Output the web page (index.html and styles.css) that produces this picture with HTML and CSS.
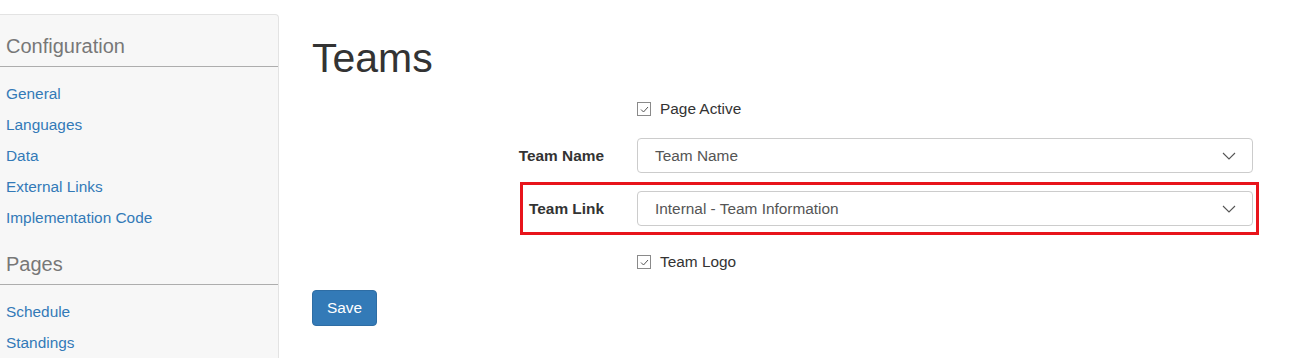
FILE: index.html
```html
<!DOCTYPE html>
<html>
<head>
<meta charset="utf-8">
<link rel="stylesheet" href="styles.css">
</head>
<body>
<div class="page">
  <aside class="sidebar">
    <h4 class="side-heading">Configuration</h4>
    <ul class="side-links">
      <li><a href="#">General</a></li>
      <li><a href="#">Languages</a></li>
      <li><a href="#">Data</a></li>
      <li><a href="#">External Links</a></li>
      <li><a href="#">Implementation Code</a></li>
    </ul>
    <h4 class="side-heading">Pages</h4>
    <ul class="side-links">
      <li><a href="#">Schedule</a></li>
      <li><a href="#">Standings</a></li>
    </ul>
  </aside>
  <main class="main">
    <h1 class="title">Teams</h1>
    <form class="form">
      <div class="row row-check">
        <div class="label"></div>
        <label class="check"><span class="box"><svg width="11" height="11" viewBox="0 0 11 11"><path d="M2 5.5 L4.5 8 L9 3" fill="none" stroke="#555" stroke-width="1"/></svg></span>Page Active</label>
      </div>
      <div class="row row-select">
        <div class="label">Team Name</div>
        <div class="select"><span>Team Name</span><svg class="chev" width="14" height="8" viewBox="0 0 14 8"><path d="M1 1 L7 7 L13 1" fill="none" stroke="#555" stroke-width="1.1"/></svg></div>
      </div>
      <div class="row row-select highlight">
        <div class="label">Team Link</div>
        <div class="select"><span>Internal - Team Information</span><svg class="chev" width="14" height="8" viewBox="0 0 14 8"><path d="M1 1 L7 7 L13 1" fill="none" stroke="#555" stroke-width="1.1"/></svg></div>
      </div>
      <div class="row row-check row-check2">
        <div class="label"></div>
        <label class="check"><span class="box"><svg width="11" height="11" viewBox="0 0 11 11"><path d="M2 5.5 L4.5 8 L9 3" fill="none" stroke="#555" stroke-width="1"/></svg></span>Team Logo</label>
      </div>
      <button type="button" class="btn">Save</button>
    </form>
  </main>
</div>
</body>
</html>
```
FILE: styles.css
```css
html, body {
  margin: 0;
  padding: 0;
  background: #fff;
}
body {
  font-family: "Liberation Sans", Arial, sans-serif;
  color: #333;
  font-size: 15.4px;
}
.page {
  display: flex;
  align-items: flex-start;
}
.sidebar {
  width: 279px;
  margin-top: 14px;
  height: 344px;
  background: #f7f7f7;
  border: 1px solid #e3e3e3;
  border-left: none;
  border-bottom: none;
  border-radius: 0 4px 0 0;
  box-sizing: border-box;
  overflow: hidden;
}
.side-heading {
  margin: 0;
  padding: 19px 0 8px 6px;
  font-size: 20px;
  line-height: 24px;
  font-weight: normal;
  color: #777;
  border-bottom: 1px solid #adadad;
}
.side-links {
  list-style: none;
  margin: 11px 0 0 0;
  padding: 0 0 0 6px;
}
.side-links li {
  line-height: 31px;
  height: 31px;
}
.side-links a {
  color: #337ab7;
  text-decoration: none;
  font-size: 15.4px;
}
.main {
  margin-left: 33px;
  flex: 1;
}
.title {
  margin: 36px 0 0 0;
  font-size: 41px;
  line-height: 44px;
  font-weight: normal;
  color: #333;
}
.form {
  display: flex;
  flex-direction: column;
  align-items: flex-start;
}
.row {
  display: flex;
  align-items: center;
}
.label {
  width: 292px;
  text-align: right;
  font-weight: bold;
  margin-right: 33px;
  flex-shrink: 0;
}
.row-check {
  margin-top: 18px;
  height: 22px;
}
.row-check2 {
  margin-top: 16px;
}
.check {
  display: flex;
  align-items: center;
  font-size: 15.4px;
  color: #333;
}
.box {
  width: 12px;
  height: 12px;
  border: 1px solid #8a8a8a;
  display: inline-flex;
  align-items: center;
  justify-content: center;
  margin-right: 9px;
  background: #fff;
}
.row-select {
  margin-top: 18px;
}
.select {
  width: 616px;
  height: 35px;
  box-sizing: border-box;
  border: 1px solid #ccc;
  border-radius: 4px;
  display: flex;
  align-items: center;
  justify-content: space-between;
  padding: 0 16px 0 17px;
  color: #555;
  background: #fff;
}
.chev {
  display: block;
}
.highlight {
  margin-top: 9px;
  margin-left: 208px;
  border: 3px solid #e8141b;
  padding: 6px 3px 6px 0;
}
.highlight .label {
  width: 81px;
}
.btn {
  margin-top: 17px;
  width: 65px;
  height: 36px;
  background: #337ab7;
  border: 1px solid #2e6da4;
  border-radius: 4px;
  color: #fff;
  font-family: "Liberation Sans", Arial, sans-serif;
  font-size: 15.4px;
  padding: 0;
}
```
